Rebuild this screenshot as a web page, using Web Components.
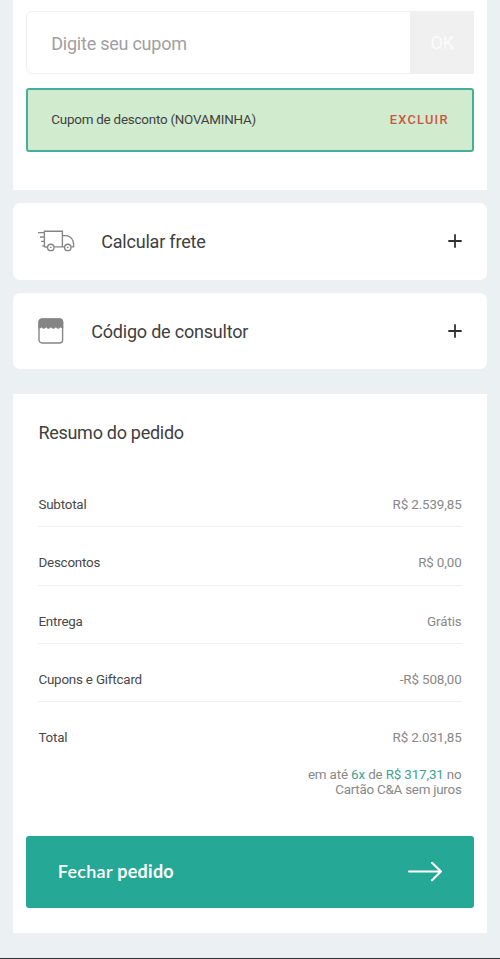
<!DOCTYPE html>
<html lang="pt-BR">
<head>
<meta charset="utf-8">
<title>Resumo do pedido</title>
<style>
html,body{margin:0;height:959px;overflow:hidden;background:#ebf0f2}
body{font-family:Roboto,"Liberation Sans",sans-serif;color:#404040}
</style>
</head>
<body>
<checkout-page>
  <coupon-card></coupon-card>
  <accordion-item style="--gap:26px">
    <svg slot="icon" width="37" height="22" viewBox="0 0 37 22" fill="none" stroke="#858585" stroke-width="1.35"><path d="M0 2.6h6.4M2 7h4.4M3 11.4h3.4M4.4 16h2"/><path d="M6.4 16.8V1.2h18v15.6H16.2M9.5 17H6.4M24.4 5.6h4.8q6.4 2.2 6.4 8.6v2.6h-2.4M24.4 16.8h2"/><circle cx="12.8" cy="17.4" r="3.2"/><circle cx="29.8" cy="17.4" r="3.2"/><path d="M12 17.4h1.6M29 17.4h1.6"/></svg>
    Calcular frete</accordion-item>
  <accordion-item style="--gap:27px">
    <svg slot="icon" width="26" height="26" viewBox="0 0 26 26"><rect x="1" y="1" width="23.6" height="24" rx="3.2" fill="#fff" stroke="#858585" stroke-width="1.4"/><path d="M.4 10V4Q.4.4 4 .4h17.6q3.6 0 3.6 3.6v6q-1.4 1-2.9-.8-2.1 3-4.4 0-2.5 3-5 0-2.4 3-4.8 0-2.4 3-4.6 0Q2 11.2.4 10z" fill="#858585"/></svg>
    Código de consultor</accordion-item>
  <order-summary>
    <span slot="title">Resumo do pedido</span>
    <summary-row label="Subtotal">R$ 2.539,85</summary-row>
    <summary-row label="Descontos">R$ 0,00</summary-row>
    <summary-row label="Entrega">Grátis</summary-row>
    <summary-row label="Cupons e Giftcard">-R$ 508,00</summary-row>
    <summary-row label="Total" last>R$ 2.031,85</summary-row>
  </order-summary>
</checkout-page>
<script>
const define=(name,html,init)=>customElements.define(name,class extends HTMLElement{
  connectedCallback(){
    if(this.shadowRoot)return;
    this.attachShadow({mode:'open'}).innerHTML=html;
    if(init)init(this);
  }
});
define('checkout-page',`<style>
:host{display:flex;flex-direction:column;box-sizing:border-box;height:959px;padding:0 12.6px;border-bottom:1.5px solid #303234}
</style><slot></slot>`);
define('coupon-card',`<style>
:host{display:flex;flex-direction:column;gap:13.5px;box-sizing:border-box;height:190px;padding:11px 13.2px 0;background:#fff;margin-bottom:13px}
.field{display:flex;box-sizing:border-box;height:63px;border:1px solid #efefef;border-radius:6px 0 0 6px}
.hint{flex:1;padding-left:24.5px;line-height:63px;font-size:18px;color:#a0a0a0;letter-spacing:-.24px}
.ok{width:64px;margin:-1px -1px -1px 0;background:#f0f0f0;color:#fbfbfb;font-size:18px;line-height:64px;text-align:center}
.applied{display:flex;justify-content:space-between;align-items:center;box-sizing:border-box;height:64px;border:2px solid #45ae9c;border-radius:3px;background:#d1ebcf;padding:0 23.5px;font-size:13.4px}
.name{letter-spacing:-.22px}
.remove{color:#c8583f;font-weight:500;font-size:12.8px;letter-spacing:1.25px}
</style><div class="field"><span class="hint">Digite seu cupom</span><span class="ok">OK</span></div>
<div class="applied"><span class="name">Cupom de desconto (NOVAMINHA)</span><span class="remove">EXCLUIR</span></div>`);
define('accordion-item',`<style>
:host{display:flex;align-items:center;box-sizing:border-box;height:76.5px;padding:0 25.6px;margin-bottom:13px;background:#fff;border-radius:7px;font-size:18px}
.icon{display:flex;margin-right:var(--gap)}
.text{flex:1;padding-top:1px;letter-spacing:-.2px}
</style><span class="icon"><slot name="icon"></slot></span><span class="text"><slot></slot></span>
<svg width="14" height="14" viewBox="0 0 14 14" stroke="#303030" stroke-width="1.8"><path d="M.3 7h13.4M7 .3v13.4"/></svg>`);
define('summary-row',`<style>
:host{display:flex;justify-content:space-between;box-sizing:border-box;height:58.3px;padding-top:28px;line-height:16px;font-size:13.4px;border-bottom:1.5px solid #f0f0f0;color:#888}
:host([last]){border-color:transparent}
.label{color:#484848;letter-spacing:-.2px}
.value{letter-spacing:-.12px}
</style><span class="label"></span><span class="value"><slot></slot></span>`,el=>{el.shadowRoot.querySelector('.label').textContent=el.getAttribute('label')});
define('pay-button',`<style>
:host{display:flex;justify-content:space-between;align-items:center;box-sizing:border-box;height:72px;padding:0 32px;margin:38.5px -12.6px 0;background:#26a896;border-radius:3px;color:#fff;font-family:Lato,sans-serif;font-size:18px;font-weight:600;letter-spacing:.27px}
span{padding-bottom:2px}
b{font-weight:700}
</style><span>Fechar <b>pedido</b></span>
<svg width="34" height="20" viewBox="0 0 34 20" fill="none" stroke="#fff" stroke-width="2" stroke-linecap="round" stroke-linejoin="round"><path d="M1 9.5h32M24 .8l9 8.7-9 8.7"/></svg>`);
define('order-summary',`<style>
:host{display:block;box-sizing:border-box;height:539px;margin-top:12px;padding:28px 25.8px 0;background:#fff}
.title{font-size:18px;line-height:22px;margin-bottom:25px;letter-spacing:-.28px}
.installments{text-align:right;font-size:13.4px;line-height:15.5px;color:#888;margin-top:6.2px;letter-spacing:-.15px}
.second{letter-spacing:-.24px}
em{font-style:normal;color:#3fa294}
</style><div class="title"><slot name="title"></slot></div><slot></slot>
<div class="installments">em até <em>6x</em> de <em>R$ 317,31</em> no<br><span class="second">Cartão C&amp;A sem juros</span></div>
<pay-button></pay-button>`);
</script>
</body>
</html>
